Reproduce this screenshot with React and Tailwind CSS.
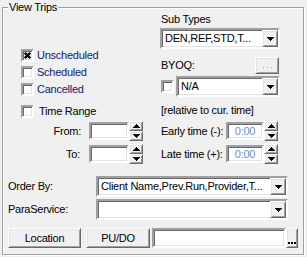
import React from "react";

const sunken =
  "border-2 border-t-[#a0a0a0] border-l-[#a0a0a0] border-b-white border-r-white shadow-[inset_1px_1px_0_#696969,inset_-1px_-1px_0_#e3e3e3]";
const raised =
  "border border-t-white border-l-white border-b-[#696969] border-r-[#696969] shadow-[inset_1px_1px_0_#e3e3e3,inset_-1px_-1px_0_#a0a0a0] bg-[#f0f0f0]";

function Down() {
  return (
    <svg width="7" height="4" shapeRendering="crispEdges">
      <rect x="0" y="0" width="7" height="1" fill="#000" />
      <rect x="1" y="1" width="5" height="1" fill="#000" />
      <rect x="2" y="2" width="3" height="1" fill="#000" />
      <rect x="3" y="3" width="1" height="1" fill="#000" />
    </svg>
  );
}
function Up() {
  return (
    <svg width="7" height="4" shapeRendering="crispEdges">
      <rect x="3" y="0" width="1" height="1" fill="#000" />
      <rect x="2" y="1" width="3" height="1" fill="#000" />
      <rect x="1" y="2" width="5" height="1" fill="#000" />
      <rect x="0" y="3" width="7" height="1" fill="#000" />
    </svg>
  );
}

function Dots({ color }) {
  return (
    <svg width="9" height="2" shapeRendering="crispEdges">
      <rect x="0" y="0" width="1" height="1" fill={color} />
      <rect x="4" y="0" width="1" height="1" fill={color} />
      <rect x="8" y="0" width="1" height="1" fill={color} />
      {color !== "#000" && (
        <>
          <rect x="1" y="1" width="1" height="1" fill="#fff" />
          <rect x="5" y="1" width="1" height="1" fill="#fff" />
        </>
      )}
    </svg>
  );
}

function Check({ checked }) {
  return (
    <div className={`${sunken} bg-white w-[13px] h-[13px] shrink-0 flex items-center justify-center`}>
      {checked && (
        <svg width="7" height="7">
          <path d="M0.8 0.8L6.2 6.2M6.2 0.8L0.8 6.2" stroke="#000" strokeWidth="2.3" />
        </svg>
      )}
    </div>
  );
}

function Combo({ className, text }) {
  return (
    <div className={`${sunken} ${className} bg-white h-[21px] flex items-stretch shrink-0`}>
      <div className="flex-1 pl-[3px] flex items-center whitespace-nowrap overflow-hidden">{text}</div>
      <div className={`${raised} w-[16px] flex items-center justify-center`}>
        <Down />
      </div>
    </div>
  );
}

function Spin() {
  return (
    <div className="w-[14px] h-[20px] flex flex-col shrink-0">
      <div className={`${raised} h-[10px] flex items-center justify-center`}>
        <Up />
      </div>
      <div className={`${raised} h-[10px] flex items-center justify-center`}>
        <Down />
      </div>
    </div>
  );
}

export default function App() {
  return (
    <div className="w-[307px] h-[257px] bg-[#f0f0f0] pt-[7px] pl-[2px] font-['Liberation_Sans',Arial,sans-serif] text-[11px] leading-[13px] tracking-[-0.25px] text-black overflow-hidden">
      <div className="relative w-[302px] h-[248px] border border-[#a0a0a0] shadow-[inset_1px_1px_0_#fff,1px_1px_0_#fff]">
        <span className="absolute left-[5px] top-[-7px] px-[1px] bg-[#f0f0f0]">View Trips</span>

        <div className="flex">
          {/* left column */}
          <div className="w-[157px] flex flex-col">
            <div className="mt-[39px] pl-[18px] flex flex-col">
              <div className="h-[17px] flex items-center">
                <Check checked />
                <span className="ml-[3px] text-[#14206e]">Unscheduled</span>
              </div>
              <div className="h-[17px] flex items-center">
                <Check />
                <span className="ml-[3px] text-[#14206e]">Scheduled</span>
              </div>
              <div className="h-[17px] flex items-center">
                <Check />
                <span className="ml-[3px] text-[#14206e]">Cancelled</span>
              </div>
              <div className="mt-[5px] h-[17px] flex items-center">
                <Check />
                <span className="ml-[5px]">Time Range</span>
              </div>
            </div>
            <div className="mt-[1px] h-[20px] flex items-center">
              <span className="w-[82px] pr-[4px] text-right">From:</span>
              <div className={`${sunken} bg-white ml-[4px] w-[40px] h-[18px]`} />
              <Spin />
            </div>
            <div className="mt-[3px] h-[20px] flex items-center">
              <span className="w-[82px] pr-[5px] text-right">To:</span>
              <div className={`${sunken} bg-white ml-[4px] w-[40px] h-[18px]`} />
              <Spin />
            </div>
          </div>

          {/* right column */}
          <div className="w-[122px] flex flex-col">
            <span className="mt-[5px] pl-[1px]">Sub Types</span>
            <Combo className="mt-[2px] w-[120px]" text="DEN,REF,STD,T..." />
            <div className="mt-[8px] w-[120px] h-[17px] flex items-center justify-between">
              <span className="pl-[1px]">BYOQ:</span>
              <div className={`${raised} mr-[1px] w-[24px] h-[17px] flex items-end justify-center pb-[4px]`}>
                <Dots color="#a0a0a0" />
              </div>
            </div>
            <div className="mt-[2px] h-[21px] flex items-center">
              <div className="ml-[1px]">
                <Check />
              </div>
              <Combo className="ml-[2px] w-[104px]" text="N/A" />
            </div>
            <span className="mt-[7px] pl-[1px] whitespace-nowrap">[relative to cur. time]</span>
            <div className="mt-[4px] h-[20px] flex items-center">
              <span className="w-[66px] pl-[1px] whitespace-nowrap">Early time (-):</span>
              <div className={`${sunken} bg-white w-[38px] h-[18px] flex items-center justify-center text-[#6f8bc3]`}>0:00</div>
              <Spin />
            </div>
            <div className="mt-[3px] h-[20px] flex items-center">
              <span className="w-[66px] pl-[1px] whitespace-nowrap">Late time (+):</span>
              <div className={`${sunken} bg-white w-[38px] h-[18px] flex items-center justify-center text-[#6f8bc3]`}>0:00</div>
              <Spin />
            </div>
          </div>
        </div>

        {/* bottom rows */}
        <div className="mt-[12px] h-[21px] flex items-center">
          <span className="w-[93px] pl-[5px]">Order By:</span>
          <Combo className="w-[192px]" text="Client Name,Prev.Run,Provider,T..." />
        </div>
        <div className="mt-[2px] h-[21px] flex items-center">
          <span className="w-[93px] pl-[5px]">ParaService:</span>
          <Combo className="w-[192px]" text="" />
        </div>
        <div className="mt-[8px] h-[20px] flex items-stretch">
          <div className={`${raised} ml-[5px] w-[73px] flex items-center justify-center`}>Location</div>
          <div className={`${raised} ml-[5px] w-[64px] flex items-center justify-center`}>PU/DO</div>
          <div className={`${sunken} bg-white ml-[2px] w-[134px]`} />
          <div className={`${raised} w-[12px] flex items-end justify-center pb-[3px]`}>
            <svg width="8" height="2" shapeRendering="crispEdges">
              <rect x="0" y="0" width="2" height="2" fill="#000" />
              <rect x="3" y="0" width="2" height="2" fill="#000" />
              <rect x="6" y="0" width="2" height="2" fill="#000" />
            </svg>
          </div>
        </div>
      </div>
    </div>
  );
}
